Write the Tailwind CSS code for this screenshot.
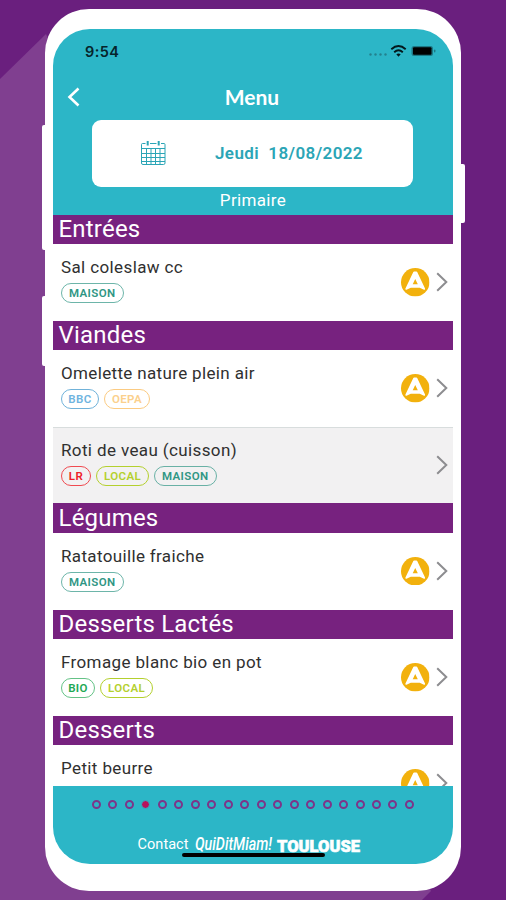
<!DOCTYPE html>
<html lang="fr">
<head>
  <meta charset="UTF-8" />
  <meta name="viewport" content="width=device-width, initial-scale=1.0" />
  <title>Menu – Qui Dit Miam! Toulouse</title>
  <script src="https://cdn.jsdelivr.net/npm/@tailwindcss/browser@4"></script>
</head>
<body class="relative w-[506px] h-[900px] overflow-hidden bg-[#6a1f7e] font-['Roboto',sans-serif]">

  <!-- Shared icons -->
  <svg class="hidden">
    <symbol id="badge-a" viewBox="0 0 28 28">
      <circle cx="14" cy="14" r="14" fill="#f2b10d" />
      <path d="M12.800 4.200h2.400L22.900 20.600l-4.700-2.100h-8.400l-4.700 2.100z" fill="#fff" stroke="#fff" stroke-width="1.600" stroke-linejoin="round" />
      <path d="M14 10.800l2.500 5.200h-5z" fill="#f2b10d" />
    </symbol>
    <symbol id="chevron" viewBox="0 0 12 20">
      <path d="M1.200 1.200L10.300 10L1.200 18.800" fill="none" stroke="#8d8d90" stroke-width="2" />
    </symbol>
  </svg>

  <!-- Backdrop shadow -->
  <svg class="absolute inset-0" width="506" height="900" viewBox="0 0 506 900">
    <path d="M0 79L46 34L431 891L422 900H0z" fill="#803f90" />
  </svg>

  <!-- Side buttons -->
  <div class="absolute left-[42px] top-[125px] w-2.5 h-[125px] bg-white rounded-l-xs"></div>
  <div class="absolute left-[42px] top-[296px] w-2.5 h-[70px] bg-white rounded-l-xs"></div>
  <div class="absolute left-[455px] top-[164px] w-[9.500px] h-[59px] bg-white rounded-r-xs"></div>

  <!-- Phone -->
  <div class="relative ml-[45px] w-[416px] h-[900px] pt-[9px]">
    <div class="h-[882px] bg-white rounded-[44px] pt-5 px-2">
      <div class="flex flex-col w-[400px] h-[834.500px] rounded-[37px] overflow-hidden bg-white">

        <!-- Header -->
        <header class="h-[185.500px] shrink-0 bg-[#2cb6c7] text-white">
          <div class="flex justify-between items-center h-[46px] pl-8 pr-4">
            <span class="font-['Inter'] text-[14.500px] font-semibold text-[#06242b] tracking-[0.400px]">9:54</span>
            <svg class="mb-0.5" width="70" height="14" viewBox="0 0 70 14">
              <g fill="#24818e">
                <circle cx="3.500" cy="10.500" r="1.200" /><circle cx="8.500" cy="10.500" r="1.200" /><circle cx="13.500" cy="10.500" r="1.200" /><circle cx="18.500" cy="10.500" r="1.200" />
              </g>
              <g fill="none" stroke="#03191d" stroke-width="1.900">
                <path d="M24.300 5.200q7.200-6.200 14.400 0" /><path d="M27.200 8.200q4.300-3.800 8.600 0" />
              </g>
              <path d="M31.500 12.800l-2.200-2.500q2.200-1.800 4.400 0z" fill="#03191d" />
              <rect x="44.500" y="2" width="21.500" height="10" rx="2.500" fill="#1d7986" />
              <rect x="46" y="3.200" width="18.500" height="7.600" rx="1" fill="#000" />
              <rect x="67" y="5.500" width="1.400" height="3" rx=".7" fill="#1d7986" />
            </svg>
          </div>
          <div class="relative flex justify-center items-center h-[45px]">
            <svg class="absolute left-[14px] top-[11.500px]" width="14" height="20" viewBox="0 0 14 20">
              <path d="M11.500 1.500L2.500 10L11.500 18.500" fill="none" stroke="#fff" stroke-width="2.600" />
            </svg>
            <h1 class="mr-0.5 mb-0.5 font-['Lato'] text-[21px] font-bold">Menu</h1>
          </div>
          <div class="flex items-center w-[321px] h-[66.500px] ml-[39px] pl-12 bg-white rounded-[9px] text-[#2ba5b6]">
            <svg width="27" height="26" viewBox="0 0 27 26" fill="none" stroke="currentColor" stroke-width="1">
              <path d="M5.500 3.500H2.500q-1 0-1 1v18.500q0 1.500 1.500 1.500h20.500q1.500 0 1.500-1.500V4.500q0-1-1-1h-3M10 3.500h6.500" />
              <path d="M1.500 8.500h23.500M1.500 13.500h23.500M1.500 17.500h23.500M1.500 21.500h23.500M6.500 8.500v16M11 8.500v16M15.500 8.500v16M20 8.500v16" />
              <path d="M7.700 1v4.500M18.700 1v4.500" stroke-width="2" />
            </svg>
            <p class="ml-[48px] text-[17px] font-semibold tracking-[0.400px] whitespace-pre">Jeudi  18/08/2022</p>
          </div>
          <p class="text-center text-[17px] leading-[27px] tracking-[0.350px]">Primaire</p>
        </header>

        <!-- Dishes -->
        <main class="flex-1 min-h-0 overflow-hidden text-[#303030]">
          <h2 class="h-[29.500px] pl-[5.500px] bg-[#77227f] text-white text-[24px] leading-[29px] tracking-[0.200px]">Entrées</h2>
          <div class="flex items-center h-[76.500px] pl-2 pr-[5.500px]">
            <div class="flex-1 mb-[5px]">
              <p class="text-[17px] leading-5 tracking-[0.380px]">Sal coleslaw cc</p>
              <div class="flex gap-[5px] mt-1.5 text-[11.500px] font-semibold leading-[18px]">
                <span class="w-[62.500px] text-center border rounded-full text-[#2f9684] border-[#2f9684]/70 tracking-[0.400px]">MAISON</span>
              </div>
            </div>
            <svg class="w-[28.500px] h-[28.500px] mr-1.5"><use href="#badge-a" /></svg>
            <svg class="w-3 h-5"><use href="#chevron" /></svg>
          </div>

          <h2 class="h-[29.500px] pl-[5.500px] bg-[#77227f] text-white text-[24px] leading-[29px] tracking-[0.200px]">Viandes</h2>
          <div class="flex items-center h-[76.500px] pl-2 pr-[5.500px]">
            <div class="flex-1 mb-[5px]">
              <p class="text-[17px] leading-5 tracking-[0.350px]">Omelette nature plein air</p>
              <div class="flex gap-[5px] mt-1.5 text-[11.500px] font-semibold leading-[18px]">
                <span class="w-[38px] text-center border rounded-full text-[#6fb4e0] border-[#4c9fd0]/80 tracking-[0.400px]">BBC</span>
                <span class="w-[46px] text-center border rounded-full text-[#fbd08c] border-[#fbcb82] tracking-[0.400px]">OEPA</span>
              </div>
            </div>
            <svg class="w-[28.500px] h-[28.500px] mr-1.5"><use href="#badge-a" /></svg>
            <svg class="w-3 h-5"><use href="#chevron" /></svg>
          </div>
          <div class="flex items-center h-[76.500px] pl-2 pr-[5.500px] bg-[#f2f1f2] border-t border-[#d8dddd]">
            <div class="flex-1 mb-[5px]">
              <p class="text-[17px] leading-5 tracking-[0.380px]">Roti de veau (cuisson)</p>
              <div class="flex gap-[5px] mt-1.5 text-[11.500px] font-semibold leading-[18px]">
                <span class="w-[30px] text-center border rounded-full text-[#ee2028] border-[#f04a50] tracking-[0.400px]">LR</span>
                <span class="w-[53px] text-center border rounded-full text-[#b4d02e] border-[#b4d02e] tracking-[0.400px]">LOCAL</span>
                <span class="w-[62.500px] text-center border rounded-full text-[#2f9684] border-[#2f9684]/70 tracking-[0.400px]">MAISON</span>
              </div>
            </div>
            <svg class="w-3 h-5"><use href="#chevron" /></svg>
          </div>

          <h2 class="h-[29.500px] pl-[5.500px] bg-[#77227f] text-white text-[24px] leading-[30px] tracking-[0.200px]">Légumes</h2>
          <div class="flex items-center h-[77px] pl-2 pr-[5.500px]">
            <div class="flex-1 mb-[5px]">
              <p class="text-[17px] leading-5 tracking-[0.350px]">Ratatouille fraiche</p>
              <div class="flex gap-[5px] mt-1.5 text-[11.500px] font-semibold leading-[18px]">
                <span class="w-[62.500px] text-center border rounded-full text-[#2f9684] border-[#2f9684]/70 tracking-[0.400px]">MAISON</span>
              </div>
            </div>
            <svg class="w-[28.500px] h-[28.500px] mr-1.5"><use href="#badge-a" /></svg>
            <svg class="w-3 h-5"><use href="#chevron" /></svg>
          </div>

          <h2 class="h-[29.500px] pl-[5.500px] bg-[#77227f] text-white text-[24px] leading-[29px] tracking-[0.200px]">Desserts Lactés</h2>
          <div class="flex items-center h-[76.500px] pl-2 pr-[5.500px]">
            <div class="flex-1 mb-[5px]">
              <p class="text-[17px] leading-5 tracking-[0.380px]">Fromage blanc bio en pot</p>
              <div class="flex gap-[5px] mt-1.5 text-[11.500px] font-semibold leading-[18px]">
                <span class="w-[34px] text-center border rounded-full text-[#22a853] border-[#22a853]/70 tracking-[0.400px]">BIO</span>
                <span class="w-[53px] text-center border rounded-full text-[#b4d02e] border-[#b4d02e] tracking-[0.400px]">LOCAL</span>
              </div>
            </div>
            <svg class="w-[28.500px] h-[28.500px] mr-1.5"><use href="#badge-a" /></svg>
            <svg class="w-3 h-5"><use href="#chevron" /></svg>
          </div>

          <h2 class="h-[29.500px] pl-[5.500px] bg-[#77227f] text-white text-[24px] leading-[29px] tracking-[0.200px]">Desserts</h2>
          <div class="flex items-center h-[76.500px] pl-2 pr-[5.500px]">
            <p class="flex-1 mb-[31px] text-[17px] leading-5 tracking-[0.380px]">Petit beurre</p>
            <svg class="w-[28.500px] h-[28.500px] mr-1.5"><use href="#badge-a" /></svg>
            <svg class="w-3 h-5"><use href="#chevron" /></svg>
          </div>
        </main>

        <!-- Footer: day pager and contact -->
        <footer class="relative h-[77.500px] shrink-0 bg-[#2cb6c7] text-white">
          <div id="pager" class="flex justify-between w-[322px] ml-[39px] pt-[13.500px]"></div>
          <svg class="absolute left-0 top-[42px]" width="400" height="32" viewBox="0 0 400 32" fill="#fff">
            <text x="84.500" y="20.500" font-size="14.500" textLength="51">Contact</text>
            <text x="142" y="21.500" font-size="19" font-style="italic" font-weight="500" textLength="77" lengthAdjust="spacingAndGlyphs">QuiDitMiam!</text>
            <text x="224" y="23.500" font-size="17" font-weight="900" textLength="83" lengthAdjust="spacingAndGlyphs" stroke="#fff" stroke-width=".6">TOULOUSE</text>
          </svg>
          <div class="absolute left-[128.500px] top-[67px] w-[143px] h-[3.500px] bg-black rounded-full"></div>
        </footer>
      </div>
    </div>
  </div>

  <script>
    // One dot per day, the fourth is the selected one
    const pager = document.getElementById("pager");
    for (let i = 0; i < 20; i++) {
      const dot = document.createElement("span");
      dot.className = i === 3
        ? "w-[9px] h-[9px] rounded-full border border-[#2cb6c7] bg-[#b8115c]"
        : "w-[9px] h-[9px] rounded-full border-2 border-[#7c3589]";
      pager.appendChild(dot);
    }
  </script>
</body>
</html>
